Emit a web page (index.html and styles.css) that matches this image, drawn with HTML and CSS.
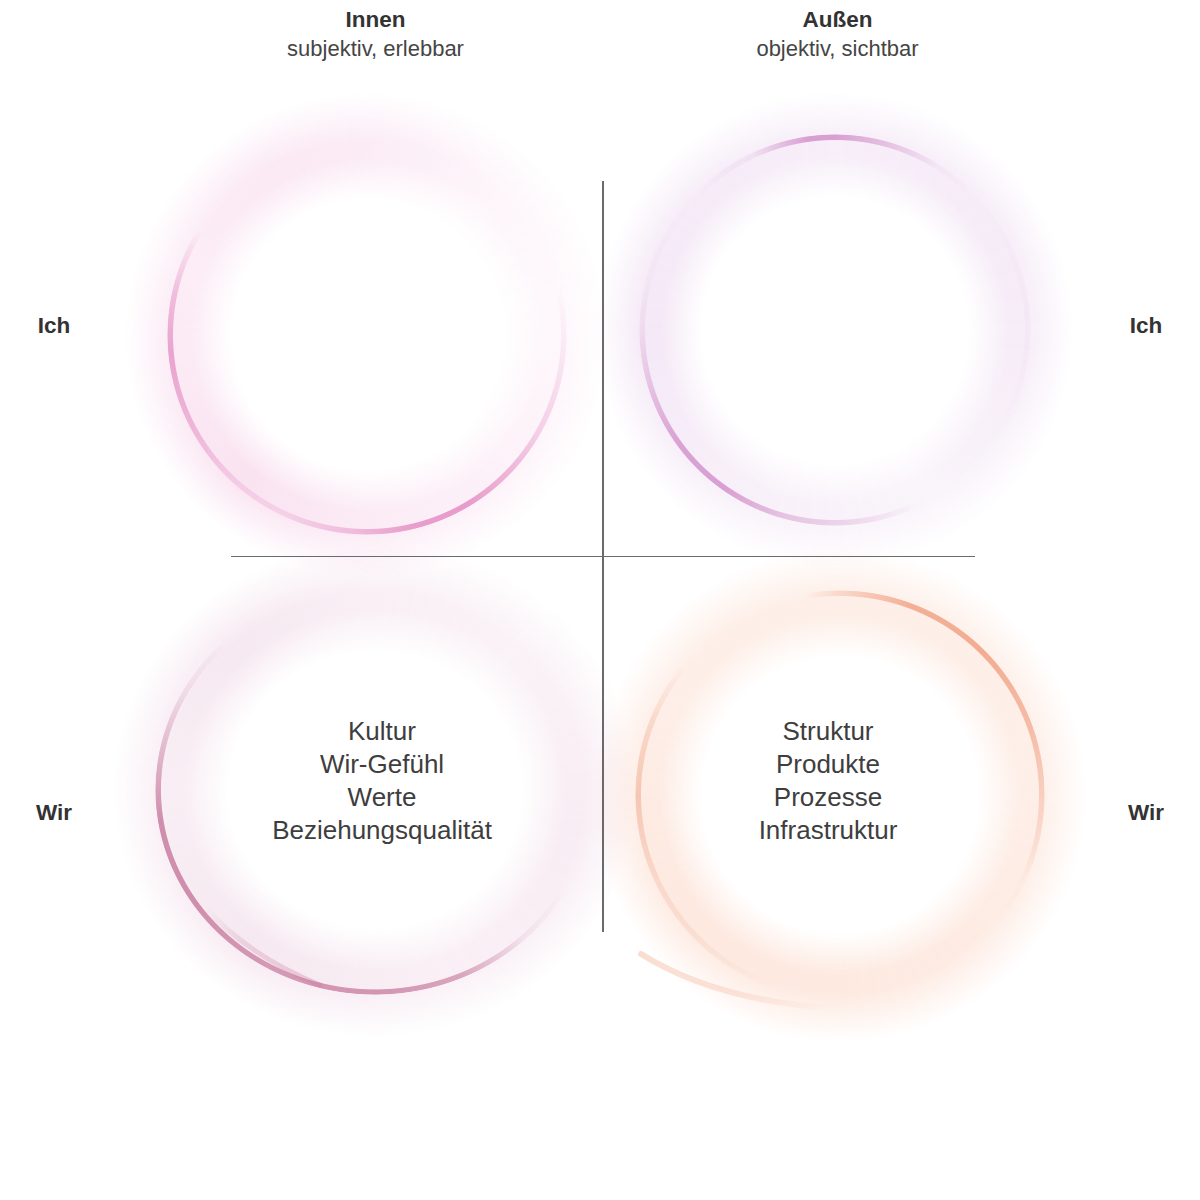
FILE: index.html
```html
<!DOCTYPE html>
<html lang="de">
<head>
<meta charset="utf-8">
<title>Quadranten</title>
<link rel="stylesheet" href="styles.css">
</head>
<body>
<main class="diagram">
  <header class="col-head col-head--inner">
    <strong class="col-title">Innen</strong>
    <span class="col-sub">subjektiv, erlebbar</span>
  </header>
  <header class="col-head col-head--outer">
    <strong class="col-title">Außen</strong>
    <span class="col-sub">objektiv, sichtbar</span>
  </header>

  <div class="side side--left side--ich">Ich</div>
  <section class="quad quad--tl">
    <div class="ring ring--tl">
      <span class="glow"></span>
      <span class="stroke"></span>
    </div>
  </section>
  <section class="quad quad--tr">
    <div class="ring ring--tr">
      <span class="glow"></span>
      <span class="stroke"></span>
    </div>
  </section>
  <div class="side side--right side--ich">Ich</div>

  <div class="side side--left side--wir">Wir</div>
  <section class="quad quad--bl">
    <div class="ring ring--bl">
      <span class="glow"></span>
      <span class="stroke"></span>
      <svg class="extra" width="440" height="410" viewBox="0 0 440 410">
        <defs>
          <linearGradient id="blInner" x1="50" y1="325" x2="160" y2="400" gradientUnits="userSpaceOnUse">
            <stop offset="0" stop-color="rgb(200,125,160)" stop-opacity="0"/>
            <stop offset="0.35" stop-color="rgb(200,125,160)" stop-opacity="0.22"/>
            <stop offset="1" stop-color="rgb(200,125,160)" stop-opacity="0.35"/>
          </linearGradient>
        </defs>
        <path d="M 50 322 Q 92 370 165 400" fill="none" stroke="url(#blInner)" stroke-width="5" stroke-linecap="round"/>
      </svg>
      <p class="quad-text">Kultur<br>Wir-Gefühl<br>Werte<br>Beziehungsqualität</p>
    </div>
  </section>
  <section class="quad quad--br">
    <div class="ring ring--br">
      <span class="glow"></span>
      <span class="stroke"></span>
      <svg class="extra" width="410" height="410" viewBox="0 0 410 410">
        <defs>
          <linearGradient id="brTail" x1="5" y1="365" x2="195" y2="418" gradientUnits="userSpaceOnUse">
            <stop offset="0" stop-color="rgb(242,170,140)" stop-opacity="0.4"/>
            <stop offset="0.5" stop-color="rgb(242,170,140)" stop-opacity="0.28"/>
            <stop offset="1" stop-color="rgb(242,170,140)" stop-opacity="0"/>
          </linearGradient>
        </defs>
        <path d="M 6 364 Q 80 410 195 418" fill="none" stroke="url(#brTail)" stroke-width="6" stroke-linecap="round"/>
      </svg>
      <p class="quad-text">Struktur<br>Produkte<br>Prozesse<br>Infrastruktur</p>
    </div>
  </section>
  <div class="side side--right side--wir">Wir</div>
</main>
</body>
</html>
```

FILE: styles.css
```css
html, body {
  margin: 0;
  padding: 0;
  background: #ffffff;
}

body {
  font-family: "Liberation Sans", Arial, Helvetica, sans-serif;
  color: #333333;
  min-height: 1200px;
}

.diagram {
  position: relative;
  width: 1200px;
  display: grid;
  grid-template-columns: 108px 495px 489px 108px;
  grid-template-rows: 80px 476px 476px 140px;
}

/* axes overlay */
.diagram::before {
  content: "";
  position: absolute;
  left: 602px;
  top: 181px;
  width: 1.5px;
  height: 751px;
  background: #6a6a6a;
  z-index: 3;
}
.diagram::after {
  content: "";
  position: absolute;
  left: 231px;
  top: 555.5px;
  width: 744px;
  height: 1.5px;
  background: #6a6a6a;
  z-index: 3;
}

/* column headers */
.col-head {
  grid-row: 1;
  display: flex;
  flex-direction: column;
  align-items: center;
  padding-top: 5px;
  line-height: 29px;
  font-size: 22px;
}
.col-head--inner { grid-column: 2; padding-left: 40px; }
.col-head--outer { grid-column: 3; padding-right: 20px; }

.col-title {
  font-weight: 700;
  font-size: 22.5px;
  color: #333333;
}
.col-sub {
  font-weight: 400;
  color: #454545;
}

/* side labels */
.side {
  display: flex;
  align-items: center;
  justify-content: center;
  font-size: 22.5px;
  font-weight: 700;
  color: #333333;
}
.side--left { grid-column: 1; }
.side--right { grid-column: 4; }
.side--ich { grid-row: 2; padding-top: 16px; }
.side--wir { grid-row: 3; padding-top: 38px; }

/* quadrants */
.quad {
  display: flex;
  align-items: center;
  justify-content: center;
}
.quad--tl { grid-column: 2; grid-row: 2; padding-left: 23px; padding-top: 34px; }
.quad--tr { grid-column: 3; grid-row: 2; padding-right: 25px; padding-top: 24px; }
.quad--bl { grid-column: 2; grid-row: 3; padding-left: 39px; padding-bottom: 8px; }
.quad--br { grid-column: 3; grid-row: 3; padding-right: 15px; padding-top: 2px; }

.ring {
  position: relative;
  box-sizing: border-box;
  flex: none;
  display: flex;
  align-items: center;
  justify-content: center;
}
.ring--tl { width: 400px; height: 400px; }
.ring--tr { width: 392px; height: 392px; }
.ring--bl { width: 440px; height: 410px; padding-left: 14px; padding-bottom: 18px; }
.ring--br { width: 410px; height: 410px; padding-right: 24px; padding-bottom: 28px; }

.stroke {
  position: absolute;
  inset: 0;
  border-radius: 50%;
  -webkit-mask: radial-gradient(closest-side, transparent calc(100% - 6.5px), #000 calc(100% - 5.5px), #000 calc(100% - 1px), transparent 100%);
  mask: radial-gradient(closest-side, transparent calc(100% - 6.5px), #000 calc(100% - 5.5px), #000 calc(100% - 1px), transparent 100%);
}

.glow {
  position: absolute;
  inset: -42px;
  border-radius: 50%;
  -webkit-mask: radial-gradient(closest-side, transparent 56%, #000 73%, #000 80%, transparent 100%);
  mask: radial-gradient(closest-side, transparent 56%, #000 73%, #000 80%, transparent 100%);
}

.extra {
  position: absolute;
  left: 0;
  top: 0;
  overflow: visible;
}

.quad-text {
  position: relative;
  z-index: 2;
  margin: 0;
  text-align: center;
  font-size: 26px;
  line-height: 33px;
  color: #3e3e3e;
  font-weight: 400;
}

/* ---- ring colour profiles ---- */
.ring--tl .stroke {
  background: conic-gradient(
    rgba(230,150,200,0) 0deg,
    rgba(230,150,200,0) 75deg,
    rgba(230,150,200,0.15) 95deg,
    rgba(230,150,200,0.4) 120deg,
    rgba(230,150,200,0.95) 150deg,
    rgba(230,150,200,0.9) 168deg,
    rgba(230,150,200,0.55) 185deg,
    rgba(230,150,200,0.28) 205deg,
    rgba(230,150,200,0.3) 220deg,
    rgba(230,150,200,0.6) 240deg,
    rgba(230,150,200,0.85) 265deg,
    rgba(230,150,200,0.55) 282deg,
    rgba(230,150,200,0) 302deg,
    rgba(230,150,200,0) 360deg);
}
.ring--tl .glow {
  background: conic-gradient(
    rgba(242,185,220,0.28) 0deg,
    rgba(242,185,220,0.14) 40deg,
    rgba(242,185,220,0.1) 80deg,
    rgba(242,185,220,0.16) 120deg,
    rgba(242,185,220,0.26) 170deg,
    rgba(242,185,220,0.4) 220deg,
    rgba(242,185,220,0.3) 260deg,
    rgba(242,185,220,0.26) 290deg,
    rgba(242,185,220,0.32) 330deg,
    rgba(242,185,220,0.28) 360deg);
}

.ring--tr .stroke {
  background: conic-gradient(
    rgba(212,150,205,0.9) 0deg,
    rgba(212,150,205,0.45) 18deg,
    rgba(212,150,205,0.08) 32deg,
    rgba(212,150,205,0) 45deg,
    rgba(212,150,205,0.06) 90deg,
    rgba(212,150,205,0) 125deg,
    rgba(212,150,205,0) 155deg,
    rgba(212,150,205,0.3) 175deg,
    rgba(212,150,205,0.5) 195deg,
    rgba(212,150,205,0.9) 215deg,
    rgba(212,150,205,0.85) 235deg,
    rgba(212,150,205,0.45) 255deg,
    rgba(212,150,205,0.18) 270deg,
    rgba(212,150,205,0.05) 285deg,
    rgba(212,150,205,0) 315deg,
    rgba(212,150,205,0.15) 335deg,
    rgba(212,150,205,0.9) 352deg,
    rgba(212,150,205,0.9) 360deg);
}
.ring--tr .glow {
  background: conic-gradient(
    rgba(222,185,228,0.24) 0deg,
    rgba(222,185,228,0.28) 60deg,
    rgba(222,185,228,0.26) 100deg,
    rgba(222,185,228,0.16) 150deg,
    rgba(222,185,228,0.2) 200deg,
    rgba(222,185,228,0.32) 270deg,
    rgba(222,185,228,0.28) 320deg,
    rgba(222,185,228,0.24) 360deg);
}

.ring--bl .stroke {
  background: conic-gradient(
    rgba(200,125,160,0) 0deg,
    rgba(200,125,160,0) 118deg,
    rgba(200,125,160,0.12) 135deg,
    rgba(200,125,160,0.65) 155deg,
    rgba(200,125,160,0.8) 180deg,
    rgba(200,125,160,0.75) 210deg,
    rgba(200,125,160,0.85) 240deg,
    rgba(200,125,160,0.85) 262deg,
    rgba(200,125,160,0.45) 282deg,
    rgba(200,125,160,0.15) 298deg,
    rgba(200,125,160,0) 315deg,
    rgba(200,125,160,0) 360deg);
}
.ring--bl .glow {
  background: conic-gradient(
    rgba(228,185,210,0.22) 0deg,
    rgba(228,185,210,0.18) 45deg,
    rgba(228,185,210,0.26) 100deg,
    rgba(228,185,210,0.22) 160deg,
    rgba(228,185,210,0.32) 220deg,
    rgba(228,185,210,0.24) 270deg,
    rgba(228,185,210,0.32) 315deg,
    rgba(228,185,210,0.22) 360deg);
}

.ring--br .stroke {
  background: conic-gradient(
    rgba(240,160,130,0.3) 0deg,
    rgba(240,160,130,0.8) 20deg,
    rgba(240,160,130,0.85) 45deg,
    rgba(240,160,130,0.65) 70deg,
    rgba(240,160,130,0.35) 95deg,
    rgba(240,160,130,0.05) 115deg,
    rgba(240,160,130,0) 130deg,
    rgba(240,160,130,0) 200deg,
    rgba(240,160,130,0.15) 222deg,
    rgba(240,160,130,0.25) 245deg,
    rgba(240,160,130,0.5) 270deg,
    rgba(240,160,130,0.3) 290deg,
    rgba(240,160,130,0) 310deg,
    rgba(240,160,130,0) 350deg,
    rgba(240,160,130,0.3) 360deg);
}
.ring--br .glow {
  background: conic-gradient(
    rgba(250,195,170,0.28) 0deg,
    rgba(250,195,170,0.28) 90deg,
    rgba(250,195,170,0.36) 180deg,
    rgba(250,195,170,0.36) 240deg,
    rgba(250,195,170,0.28) 300deg,
    rgba(250,195,170,0.28) 360deg);
}
```
